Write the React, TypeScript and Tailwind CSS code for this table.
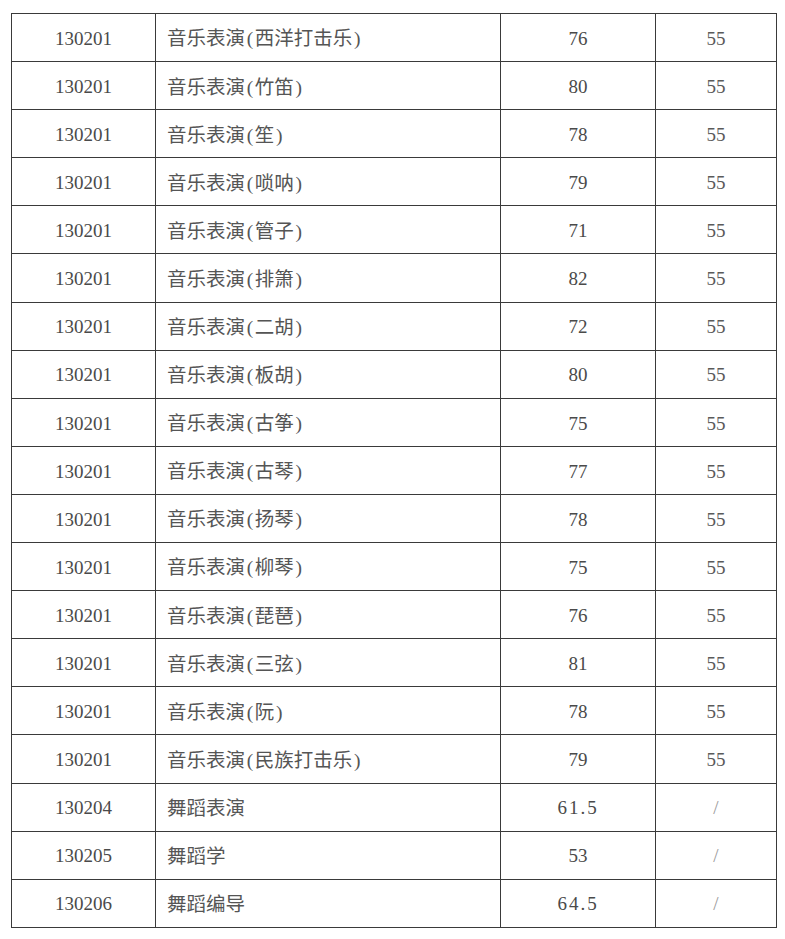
import React from "react";

type Row = {
    code: string;
    name: string;
    score: string;
    extra: string;
};

const rows: Row[] = [
    { code: "130201", name: "音乐表演(西洋打击乐)", score: "76", extra: "55" },
    { code: "130201", name: "音乐表演(竹笛)", score: "80", extra: "55" },
    { code: "130201", name: "音乐表演(笙)", score: "78", extra: "55" },
    { code: "130201", name: "音乐表演(唢呐)", score: "79", extra: "55" },
    { code: "130201", name: "音乐表演(管子)", score: "71", extra: "55" },
    { code: "130201", name: "音乐表演(排箫)", score: "82", extra: "55" },
    { code: "130201", name: "音乐表演(二胡)", score: "72", extra: "55" },
    { code: "130201", name: "音乐表演(板胡)", score: "80", extra: "55" },
    { code: "130201", name: "音乐表演(古筝)", score: "75", extra: "55" },
    { code: "130201", name: "音乐表演(古琴)", score: "77", extra: "55" },
    { code: "130201", name: "音乐表演(扬琴)", score: "78", extra: "55" },
    { code: "130201", name: "音乐表演(柳琴)", score: "75", extra: "55" },
    { code: "130201", name: "音乐表演(琵琶)", score: "76", extra: "55" },
    { code: "130201", name: "音乐表演(三弦)", score: "81", extra: "55" },
    { code: "130201", name: "音乐表演(阮)", score: "78", extra: "55" },
    { code: "130201", name: "音乐表演(民族打击乐)", score: "79", extra: "55" },
    { code: "130204", name: "舞蹈表演", score: "61.5", extra: "/" },
    { code: "130205", name: "舞蹈学", score: "53", extra: "/" },
    { code: "130206", name: "舞蹈编导", score: "64.5", extra: "/" },
];

const cell = "border border-[#3a3a3a] h-[48.1px] p-0 pt-[3px] align-middle";

// half-width brackets like the Song font in the source sheet
const Name = ({ text }: { text: string }) => {
    const parts = text.split(/([()])/).filter(Boolean);
    return (
        <>
            {parts.map((p, i) =>
                p === "(" || p === ")" ? (
                    <span key={i} className="inline-block w-[0.5em] text-center">
                        {p}
                    </span>
                ) : (
                    <span key={i}>{p}</span>
                )
            )}
        </>
    );
};

const App = () => {
    return (
        <div className="min-h-screen bg-white pt-[13px] pl-[11px]">
            <table
                className="border-collapse w-[765px] table-fixed text-[19px] text-[#4a4a4a]"
                style={{ fontFamily: '"Liberation Serif", "Noto Sans CJK SC", serif' }}
            >
                <colgroup>
                    <col className="w-[144px]" />
                    <col className="w-[345px]" />
                    <col className="w-[155px]" />
                    <col className="w-[121px]" />
                </colgroup>
                <tbody>
                    {rows.map((r, i) => (
                        <tr key={i}>
                            <td className={`${cell} text-center`}>{r.code}</td>
                            <td className={`${cell} pl-[11px] text-[19.5px] text-[#555]`}>
                                <Name text={r.name} />
                            </td>
                            <td className={`${cell} text-center`}>
                                {r.score.includes(".") ? (
                                    <span className="tracking-[2px]">{r.score}</span>
                                ) : (
                                    r.score
                                )}
                            </td>
                            <td
                                className={`${cell} text-center ${
                                    r.extra === "/" ? "text-[#9a9a9a] font-light" : "text-[#5a5a5a]"
                                }`}
                            >
                                {r.extra}
                            </td>
                        </tr>
                    ))}
                </tbody>
            </table>
        </div>
    );
};

export default App;
